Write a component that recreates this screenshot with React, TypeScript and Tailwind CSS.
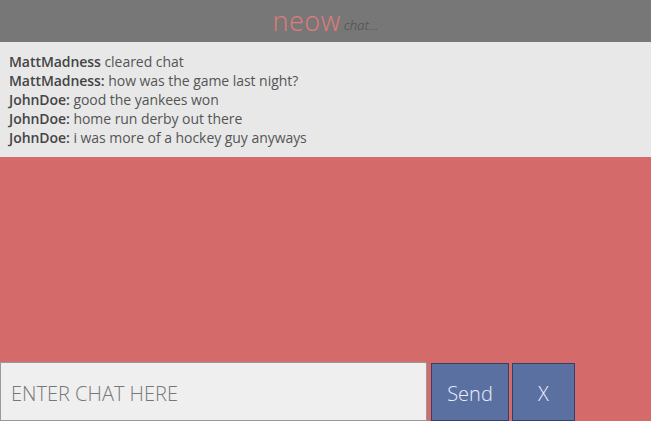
import React from "react";

const msgs: [string, string][] = [
  ["MattMadness", "cleared chat"],
  ["MattMadness:", "how was the game last night?"],
  ["JohnDoe:", "good the yankees won"],
  ["JohnDoe:", "home run derby out there"],
  ["JohnDoe:", "i was more of a hockey guy anyways"],
];

export default function App() {
  return (
    <div
      className="w-[651px] h-[421px] flex flex-col bg-[#d56a6a] overflow-hidden"
      style={{ fontFamily: '"Open Sans", sans-serif' }}
    >
      <div className="h-[42px] bg-[#777777] flex items-center justify-center">
        <span className="text-[27px] font-light text-[#e07b7b] leading-none tracking-[0.5px] mt-[-2px]">neow</span>
        <span className="text-[13px] italic font-light tracking-[0.2px] text-[#4a4a4a] ml-[3px] mt-[10px]">chat...</span>
      </div>
      <div className="h-[115px] bg-[#e8e8e8] pl-[9px] pt-[10px] text-[14px] tracking-[-0.05px] leading-[19px] text-[#555]">
        {msgs.map(([u, t], i) => (
          <div key={i}>
            <span className="font-semibold text-[#444]">{u}</span> {t}
          </div>
        ))}
      </div>
      <div className="flex-1" />
      <div className="flex items-end h-[59px]">
        <div className="w-[427px] h-[59px] bg-[#efefef] border border-[#999] rounded-tr-[2px] flex items-center pl-[10px] pt-[4px] text-[20px] font-light text-[#777]">
          ENTER CHAT HERE
        </div>
        <div className="ml-[4px] w-[78px] h-[58px] bg-[#5a70a0] border border-[#34406a] flex items-center justify-center pt-[4px] text-[20px] text-[#eef] font-light">
          Send
        </div>
        <div className="ml-[3px] w-[63px] h-[58px] bg-[#5a70a0] border border-[#34406a] flex items-center justify-center pt-[4px] text-[20px] text-[#eef] font-light">
          X
        </div>
      </div>
    </div>
  );
}
